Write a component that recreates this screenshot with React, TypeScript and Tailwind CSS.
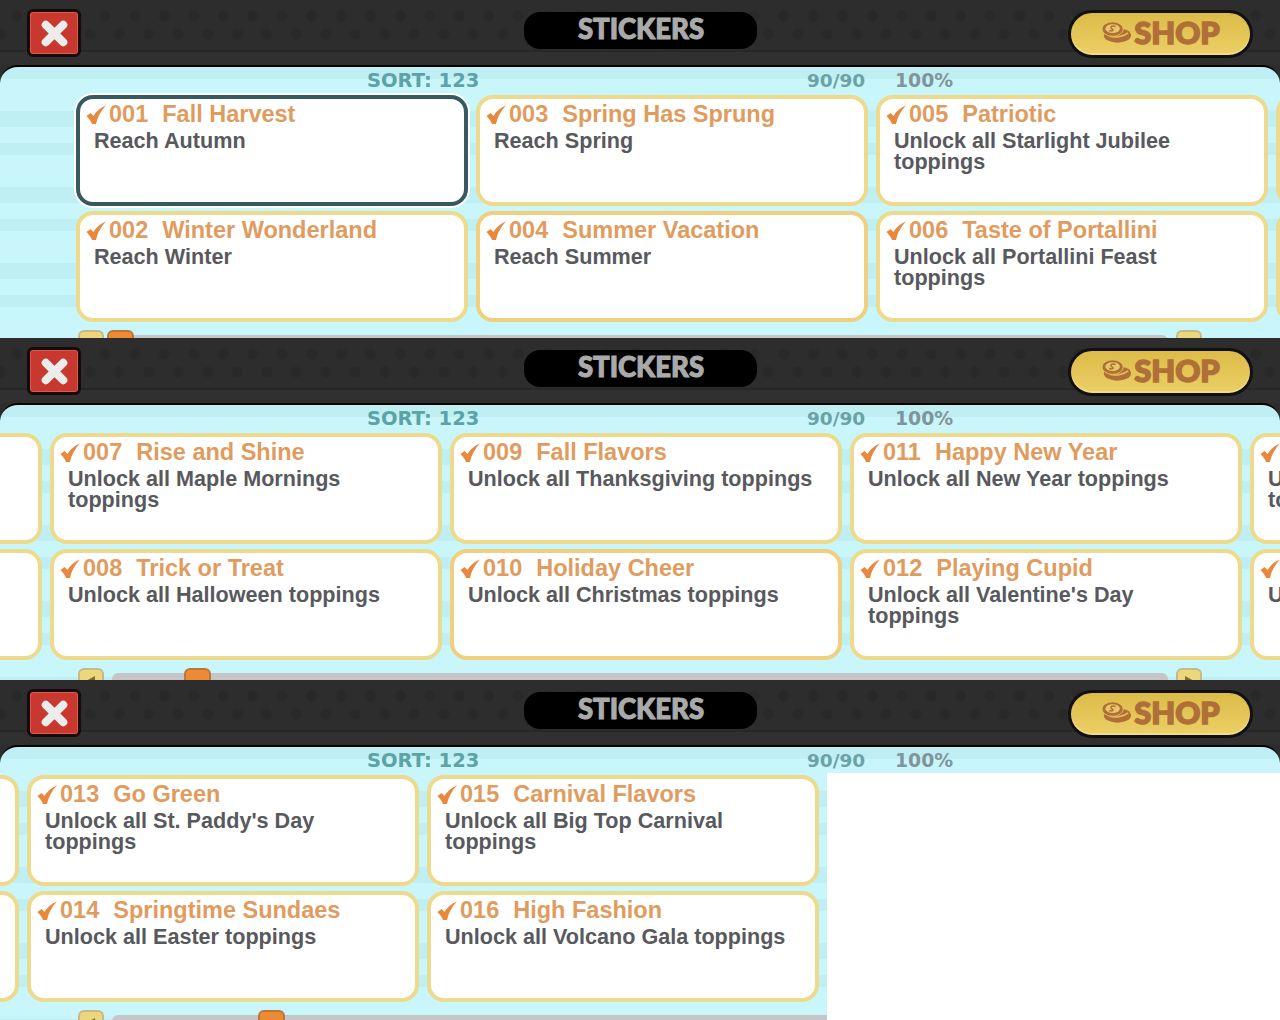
import React from "react";

type Card = { n: string; t: string; d: string[] };

const cols: Card[][] = [
  [{ n: "001", t: "Fall Harvest", d: ["Reach Autumn"] }, { n: "002", t: "Winter Wonderland", d: ["Reach Winter"] }],
  [{ n: "003", t: "Spring Has Sprung", d: ["Reach Spring"] }, { n: "004", t: "Summer Vacation", d: ["Reach Summer"] }],
  [{ n: "005", t: "Patriotic", d: ["Unlock all Starlight Jubilee", "toppings"] }, { n: "006", t: "Taste of Portallini", d: ["Unlock all Portallini Feast", "toppings"] }],
  [{ n: "007", t: "Rise and Shine", d: ["Unlock all Maple Mornings", "toppings"] }, { n: "008", t: "Trick or Treat", d: ["Unlock all Halloween toppings"] }],
  [{ n: "009", t: "Fall Flavors", d: ["Unlock all Thanksgiving toppings"] }, { n: "010", t: "Holiday Cheer", d: ["Unlock all Christmas toppings"] }],
  [{ n: "011", t: "Happy New Year", d: ["Unlock all New Year toppings"] }, { n: "012", t: "Playing Cupid", d: ["Unlock all Valentine's Day", "toppings"] }],
  [{ n: "013", t: "Go Green", d: ["Unlock all St. Paddy's Day", "toppings"] }, { n: "014", t: "Springtime Sundaes", d: ["Unlock all Easter toppings"] }],
  [{ n: "015", t: "Carnival Flavors", d: ["Unlock all Big Top Carnival", "toppings"] }, { n: "016", t: "High Fashion", d: ["Unlock all Volcano Gala toppings"] }],
];

function Check() {
  return (
    <svg viewBox="0 0 20 20" className="w-[20px] h-[20px] shrink-0 -ml-[2px]">
      <path d="M0.5 11 L4.5 8 L7.5 11 C10 6.5 14 3 20 0.5 C15 5.5 11.5 12 10 19 L6 19 C4.8 16 3 13.5 0.5 11 Z" fill="#e8883f" />
    </svg>
  );
}

function CardBox({ c, selected, warm }: { c: Card; selected?: boolean; warm?: boolean }) {
  const border = selected
    ? "border-[#38595e] shadow-[0_0_0_2px_#ffffff]"
    : warm
      ? "border-[#f0cf7e]"
      : "border-[#edda8c]";
  return (
    <div className={`w-[392px] h-[111px] rounded-[17px] bg-white box-border border-[4px] pl-[8px] pt-[3px] ${border}`}>
      <div className="flex items-center h-[26px] text-[23.5px] font-bold text-[#e09c5e] whitespace-pre">
        <Check />
        <span className="ml-[3px]">{c.n}</span>
        <span className="ml-[14px]">{c.t}</span>
      </div>
      <div className="ml-[6px] text-[21.6px] font-bold text-[#58595d] leading-[21px] mt-[2px]">
        {c.d.map((l) => (
          <div key={l}>{l}</div>
        ))}
      </div>
    </div>
  );
}

function Arrow({ right }: { right?: boolean }) {
  return (
    <div className="w-[26px] h-[26px] shrink-0 rounded-[6px] border-[2px] border-[#c8b988] bg-[#ecd77c] flex items-center justify-center">
      <svg viewBox="0 0 14 14" className="w-[14px] h-[14px]">
        <path d={right ? "M3 2 L12 7 L3 12 Z" : "M11 2 L2 7 L11 12 Z"} fill="#7d6a35" />
      </svg>
    </div>
  );
}

function Coins() {
  return (
    <svg viewBox="0 0 32 24" className="w-[31px] h-[24px] shrink-0">
      <ellipse cx="17" cy="15.5" rx="14" ry="7.5" fill="#ae7038" />
      <path d="M9 16.5 C15 18 23 17 28 13" stroke="#e4c059" strokeWidth="1.6" fill="none" />
      <ellipse cx="12" cy="9" rx="11" ry="7.5" fill="#ae7038" stroke="#e4c059" strokeWidth="1" />
      <ellipse cx="12" cy="8.5" rx="7.5" ry="4.6" fill="#e8c765" />
      <path d="M15 6.5 C12 5 8.5 6.5 11 8.5 C14 10 12 11.5 8.5 10.5" stroke="#ae7038" strokeWidth="1.6" fill="none" />
    </svg>
  );
}

function Panel({ h, start, ml, thumb, blank }: { h: string; start: number; ml: string; thumb: string; blank?: boolean }) {
  const shown = cols.slice(start, start + 5);
  return (
    <section className={`relative overflow-hidden bg-[#2d2d2d] ${h}`}>
      <header className="grid grid-cols-3 items-start h-[65px] px-[27px] pt-[9px] bg-[linear-gradient(to_bottom,transparent_50px,#272727_50px,#272727_52px,#303030_52px,#303030_65px),radial-gradient(circle,#292929_5px,transparent_6px),radial-gradient(circle,#292929_5px,transparent_6px)] bg-[length:100%_65px,29.5px_18px,29.5px_18px] bg-[position:0_0,2px_7px,16px_25px] bg-repeat-x">
        <div className="justify-self-start w-[54px] h-[48px] rounded-[6px] border-[3px] border-[#170b0a] bg-[#c9382e] shadow-[inset_0_0_0_1px_#dd5a4e] flex items-center justify-center">
          <svg viewBox="0 0 30 30" className="w-[29px] h-[29px]">
            <path d="M6 6 L24 24 M24 6 L6 24" stroke="#ececec" strokeWidth="8.5" strokeLinecap="round" />
          </svg>
        </div>
        <div className="justify-self-center ml-[2px] mt-[3px] w-[233px] h-[37px] pb-[4px] rounded-[16px] bg-black flex items-center justify-center text-[#aaaaaa] text-[27.5px] font-black font-['Lato',sans-serif] [-webkit-text-stroke:1px_#aaaaaa]">
          STICKERS
        </div>
        <div className="justify-self-end mt-[1px] w-[185px] h-[48px] pb-[4px] rounded-[24px] border-[3px] border-[#111111] bg-[linear-gradient(to_bottom,#dcbb48,#ecd066)] shadow-[inset_0_-2px_0_#f0dc8a] flex items-center justify-center gap-[2px] text-[#ae7038] text-[31px] font-black font-['Lato',sans-serif] [-webkit-text-stroke:1.5px_#ae7038]">
          <Coins />
          SHOP
        </div>
      </header>
      <div className="h-full rounded-t-[18px] border-t-[2px] border-black bg-[repeating-linear-gradient(to_bottom,#bfeff3_0px,#bfeff3_12px,#c9f6fa_12px,#c9f6fa_44px,#bfeff3_44px,#bfeff3_60px,#c9f6fa_60px,#c9f6fa_76px)] font-['Liberation_Sans',Arial,sans-serif]">
        <div className="flex items-baseline h-[28px] leading-[28px] font-bold font-['DejaVu_Sans',sans-serif]">
          <span className="ml-[367px] w-[440px] text-[19.5px] text-[#5ba3a6]">SORT: 123</span>
          <span className="w-[88px] text-[18.5px] text-[#6aa3a6]">90/90</span>
          <span className="text-[18.8px] text-[#7f959b]">100%</span>
        </div>
        <div className={`grid grid-rows-2 grid-flow-col auto-cols-[392px] gap-x-[8px] gap-y-[5px] w-max ${ml}`}>
          {shown.map((col) => (
            <React.Fragment key={col[0].n}>
              <CardBox c={col[0]} selected={col[0].n === "001"} />
              <CardBox c={col[1]} warm={col[1].n === "004" || col[1].n === "010"} />
            </React.Fragment>
          ))}
          {start === 5 && (
            <>
              <div className="w-[392px] h-[111px] rounded-[17px] bg-white border-[4px] border-[#edda8c]" />
              <div className="w-[392px] h-[111px] rounded-[17px] bg-white border-[4px] border-[#edda8c]" />
            </>
          )}
        </div>
        <div className="relative flex items-start gap-[8px] mt-[8px] ml-[78px] w-[1124px]">
          <Arrow />
          <div className="mt-[5px] w-[1058px] h-[20px] rounded-[6px] bg-[#c6c6c6]" />
          <Arrow right />
          <div className={`absolute top-0 w-[27px] h-[26px] rounded-[6px] border-[2px] border-[#b9773a] bg-[#ee8a33] ${thumb}`} />
        </div>
      </div>
      {blank && <div className="absolute right-0 bottom-0 w-[453px] h-[247px] bg-white" />}
    </section>
  );
}

export default function App() {
  return (
    <div className="w-[1280px] h-[1020px] overflow-hidden bg-white">
      <Panel h="h-[338px]" start={0} ml="ml-[76px]" thumb="left-[29px]" />
      <Panel h="h-[342px]" start={2} ml="ml-[-350px]" thumb="left-[106px]" />
      <Panel h="h-[340px]" start={5} ml="ml-[-373px]" thumb="left-[180px]" blank />
    </div>
  );
}
